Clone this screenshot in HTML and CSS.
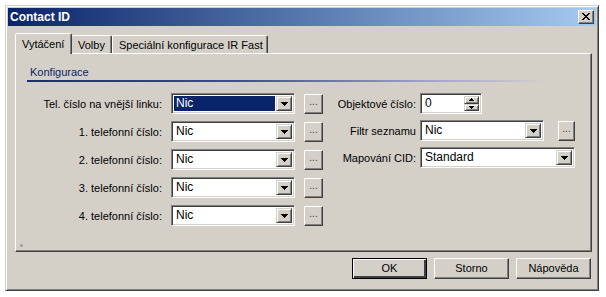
FILE: index.html
```html
<!DOCTYPE html>
<html lang="cs">
<head>
    <meta charset="UTF-8">
    <title>Contact ID</title>
    <link rel="stylesheet" href="styles.css">
</head>
<body>
    <div class="dialog">
        <div class="titlebar">
            <span class="title">Contact ID</span>
            <div class="close">
                <svg width="8" height="7" viewBox="0 0 8 7" shape-rendering="crispEdges"><path d="M0 0h2v1h-2z M6 0h2v1h-2z M1 1h2v1h-2z M5 1h2v1h-2z M2 2h4v1h-4z M3 3h2v1h-2z M2 4h4v1h-4z M1 5h2v1h-2z M5 5h2v1h-2z M0 6h2v1h-2z M6 6h2v1h-2z"/></svg>
            </div>
        </div>
        <div class="content">
            <div class="tabs">
                <div class="tab active">Vytáčení</div>
                <div class="tab">Volby</div>
                <div class="tab">Speciální konfigurace IR Fast</div>
            </div>
            <div class="panel">
                <div class="section">Konfigurace</div>
                <div class="section-line"></div>
                <div class="columns">
                    <div class="col col-left">
                        <div class="row">
                            <label>Tel. číslo na vnější linku:</label>
                            <div class="combo"><span class="value selected">Nic</span><span class="drop"><svg width="7" height="4" viewBox="0 0 7 4" shape-rendering="crispEdges"><path d="M0 0h7v1h-1v1h-1v1h-1v1h-1v-1h-1v-1h-1v-1h-1z"/></svg></span></div>
                            <div class="more">...</div>
                        </div>
                        <div class="row">
                            <label>1. telefonní číslo:</label>
                            <div class="combo"><span class="value">Nic</span><span class="drop"><svg width="7" height="4" viewBox="0 0 7 4" shape-rendering="crispEdges"><path d="M0 0h7v1h-1v1h-1v1h-1v1h-1v-1h-1v-1h-1v-1h-1z"/></svg></span></div>
                            <div class="more">...</div>
                        </div>
                        <div class="row">
                            <label>2. telefonní číslo:</label>
                            <div class="combo"><span class="value">Nic</span><span class="drop"><svg width="7" height="4" viewBox="0 0 7 4" shape-rendering="crispEdges"><path d="M0 0h7v1h-1v1h-1v1h-1v1h-1v-1h-1v-1h-1v-1h-1z"/></svg></span></div>
                            <div class="more">...</div>
                        </div>
                        <div class="row">
                            <label>3. telefonní číslo:</label>
                            <div class="combo"><span class="value">Nic</span><span class="drop"><svg width="7" height="4" viewBox="0 0 7 4" shape-rendering="crispEdges"><path d="M0 0h7v1h-1v1h-1v1h-1v1h-1v-1h-1v-1h-1v-1h-1z"/></svg></span></div>
                            <div class="more">...</div>
                        </div>
                        <div class="row">
                            <label>4. telefonní číslo:</label>
                            <div class="combo"><span class="value">Nic</span><span class="drop"><svg width="7" height="4" viewBox="0 0 7 4" shape-rendering="crispEdges"><path d="M0 0h7v1h-1v1h-1v1h-1v1h-1v-1h-1v-1h-1v-1h-1z"/></svg></span></div>
                            <div class="more">...</div>
                        </div>
                    </div>
                    <div class="col col-right">
                        <div class="row">
                            <label>Objektové číslo:</label>
                            <div class="spin">
                                <span class="value">0</span>
                                <span class="spin-buttons">
                                    <span class="spin-btn"><svg width="5" height="3" viewBox="0 0 5 3" shape-rendering="crispEdges"><path d="M2 0h1v1h1v1h1v1h-5v-1h1v-1h1z"/></svg></span>
                                    <span class="spin-btn"><svg width="5" height="3" viewBox="0 0 5 3" shape-rendering="crispEdges"><path d="M0 0h5v1h-1v1h-1v1h-1v-1h-1v-1h-1z"/></svg></span>
                                </span>
                            </div>
                        </div>
                        <div class="row">
                            <label>Filtr seznamu</label>
                            <div class="combo"><span class="value">Nic</span><span class="drop"><svg width="7" height="4" viewBox="0 0 7 4" shape-rendering="crispEdges"><path d="M0 0h7v1h-1v1h-1v1h-1v1h-1v-1h-1v-1h-1v-1h-1z"/></svg></span></div>
                            <div class="more more-small">...</div>
                        </div>
                        <div class="row">
                            <label>Mapování CID:</label>
                            <div class="combo combo-wide"><span class="value">Standard</span><span class="drop"><svg width="7" height="4" viewBox="0 0 7 4" shape-rendering="crispEdges"><path d="M0 0h7v1h-1v1h-1v1h-1v1h-1v-1h-1v-1h-1v-1h-1z"/></svg></span></div>
                        </div>
                    </div>
                </div>
                <div class="grip"></div>
            </div>
            <div class="buttons">
                <div class="btn default">OK</div>
                <div class="btn">Storno</div>
                <div class="btn">Nápověda</div>
            </div>
        </div>
    </div>
</body>
</html>
```

FILE: styles.css
```css
body {
    margin: 0;
    padding: 5px 0 0 5px;
    background-color: #ffffff;
    font-family: "Liberation Sans", Arial, sans-serif;
    font-size: 11px;
    color: #000000;
}
.dialog {
    box-sizing: border-box;
    width: 594px;
    height: 286px;
    padding: 2px;
    background-color: #d4d0c8;
    border: 1px solid;
    border-color: #d4d0c8 #404040 #404040 #d4d0c8;
    box-shadow: inset 1px 1px #ffffff, inset -1px -1px #808080;
    display: flex;
    flex-direction: column;
}
/* Title bar */
.titlebar {
    height: 18px;
    display: flex;
    align-items: center;
    justify-content: space-between;
    padding: 0 2px;
    background: linear-gradient(to right, #0a246a, #a6caf0);
}
.title {
    color: #ffffff;
    font-weight: bold;
    font-size: 12px;
}
.close {
    box-sizing: border-box;
    width: 16px;
    height: 14px;
    background-color: #d4d0c8;
    border: 1px solid;
    border-color: #ffffff #404040 #404040 #ffffff;
    box-shadow: inset -1px -1px #808080;
    display: flex;
    align-items: center;
    justify-content: center;
}
.close svg {
    fill: #000000;
    margin: 0 1px 1px 0;
}
.content {
    flex: 1;
    padding: 7px 4px 0 7px;
    display: flex;
    flex-direction: column;
}
/* Tabs */
.tabs {
    display: flex;
    align-items: flex-end;
    height: 20px;
    position: relative;
    z-index: 1;
}
.tab {
    box-sizing: border-box;
    height: 18px;
    padding: 2px 0 0 6px;
    border: 1px solid;
    border-bottom: none;
    border-color: #ffffff #404040 transparent #ffffff;
    box-shadow: inset -1px 0 #808080;
    border-radius: 2px 2px 0 0;
    line-height: 14px;
    white-space: nowrap;
}
.tab.active {
    width: 57px;
    height: 21px;
    margin-bottom: -1px;
    padding: 3px 0 0 6px;
    background-color: #d4d0c8;
}
.tab.active + .tab {
    border-left: none;
}
.tab:nth-child(2) {
    width: 40px;
}
.tab:nth-child(3) {
    width: 156px;
}
/* Panel */
.panel {
    box-sizing: border-box;
    height: 199px;
    border: 1px solid;
    border-color: #ffffff #404040 #404040 #ffffff;
    box-shadow: inset -1px -1px #808080;
    padding: 12px 0 0 13px;
    position: relative;
}
.section {
    line-height: 13px;
    padding-left: 1px;
    color: #0a246a;
}
.section-line {
    width: 520px;
    height: 2px;
    margin: 1px 0 0 -2px;
    background: linear-gradient(to right, #1c2c78 0%, #3a4a98 40%, #a8a8d0 80%, #d4d0c8 100%);
}
.columns {
    display: flex;
    margin-top: 11px;
    margin-left: -13px;
}
.col {
    display: flex;
    flex-direction: column;
}
.col-left {
    width: 308px;
    gap: 7px;
}
.col-right {
    gap: 6px;
}
.row {
    display: flex;
    align-items: center;
    height: 21px;
}
.col-left label {
    width: 146px;
    text-align: right;
    margin-right: 9px;
}
.col-right label {
    width: 92px;
    text-align: right;
    margin-right: 4px;
}
/* Sunken fields */
.combo, .spin {
    box-sizing: border-box;
    height: 21px;
    width: 124px;
    background-color: #ffffff;
    border: 1px solid;
    border-color: #808080 #ffffff #ffffff #808080;
    box-shadow: inset 1px 1px #404040, inset -1px -1px #d4d0c8;
    padding: 2px;
    display: flex;
}
.combo-wide {
    width: 155px;
}
.spin {
    width: 62px;
}
.value {
    flex: 1;
    padding-left: 2px;
    line-height: 15px;
    font-size: 12px;
}
.value.selected {
    background-color: #0a246a;
    color: #ffffff;
    margin-right: 1px;
}
.drop {
    box-sizing: border-box;
    width: 16px;
    height: 15px;
    background-color: #d4d0c8;
    border: 1px solid;
    border-color: #d4d0c8 #404040 #404040 #d4d0c8;
    box-shadow: inset 1px 1px #ffffff, inset -1px -1px #808080;
    display: flex;
    align-items: center;
    justify-content: center;
}
.drop svg, .spin-btn svg {
    fill: #000000;
}
.spin-buttons {
    display: flex;
    flex-direction: column;
    width: 15px;
}
.spin-btn {
    box-sizing: border-box;
    height: 8px;
    flex: 1;
    background-color: #d4d0c8;
    border: 1px solid;
    border-color: #d4d0c8 #404040 #404040 #d4d0c8;
    box-shadow: inset 1px 1px #ffffff, inset -1px -1px #808080;
    display: flex;
    align-items: center;
    justify-content: center;
}
.more {
    box-sizing: border-box;
    width: 19px;
    height: 20px;
    margin-left: 9px;
    border: 1px solid;
    border-color: #ffffff #404040 #404040 #ffffff;
    box-shadow: inset -1px -1px #808080;
    text-align: center;
    line-height: 14px;
    font-size: 10px;
    color: #404040;
}
.more-small {
    width: 17px;
    margin-left: 14px;
}
.grip {
    position: absolute;
    left: 4px;
    bottom: 4px;
    width: 3px;
    height: 3px;
    background-color: #a8a49c;
    border-radius: 1px;
}
/* Dialog buttons */
.buttons {
    display: flex;
    justify-content: flex-end;
    gap: 7px;
    margin-top: 6px;
    padding-right: 1px;
}
.btn {
    box-sizing: border-box;
    width: 75px;
    height: 21px;
    border: 1px solid;
    border-color: #ffffff #404040 #404040 #ffffff;
    box-shadow: inset -1px -1px #808080;
    text-align: center;
    line-height: 19px;
}
.btn.default {
    border: 1px solid #000000;
    box-shadow: inset 1px 1px #ffffff, inset -2px -2px #404040, inset -1px -1px #808080;
}
```
